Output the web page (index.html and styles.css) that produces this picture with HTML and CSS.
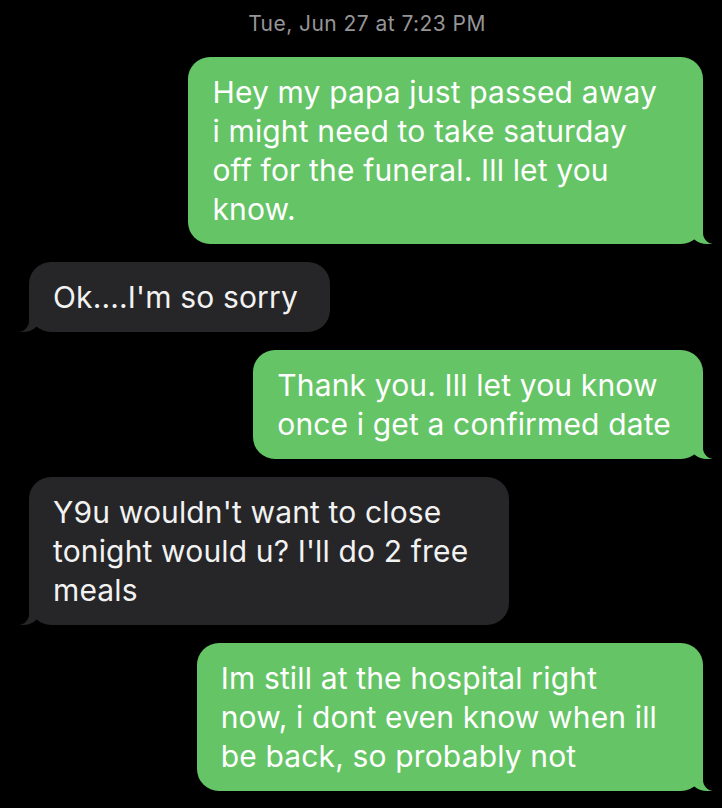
FILE: index.html
```html
<!DOCTYPE html>
<html lang="en">
<head>
    <meta charset="UTF-8">
    <title>Messages</title>
    <link rel="stylesheet" href="styles.css">
</head>
<body>

<div class="thread">
    <div class="stamp">Tue, Jun 27 at 7:23 PM</div>

    <div class="bubble sent long">Hey my papa just passed away<br>i might need to take saturday<br>off for the funeral. Ill let you<br>know.</div>

    <div class="bubble received">Ok....I'm so sorry</div>

    <div class="bubble sent">Thank you. Ill let you know<br>once i get a confirmed date</div>

    <div class="bubble received mid">Y9u wouldn't want to close<br>tonight would u? I'll do 2 free<br>meals</div>

    <div class="bubble sent long">Im still at the hospital right<br>now, i dont even know when ill<br>be back, so probably not</div>
</div>

</body>
</html>
```

FILE: styles.css
```css
body {
    margin: 0;
    background: #000;
    font-family: Inter, 'Liberation Sans', sans-serif;
}

.thread {
    display: flex;
    flex-direction: column;
    gap: 18px;
    padding: 12px 19px 16px 29px;
}

.stamp {
    align-self: center;
    margin: 0 0 3px 2px;
    font-size: 21px;
    line-height: 24px;
    letter-spacing: 0.45px;
    color: #959597;
}

.bubble {
    position: relative;
    padding: 16px 32px 15px 24px;
    border-radius: 22px;
    font-size: 30px;
    line-height: 39px;
    letter-spacing: 0.15px;
    color: #fff;
    white-space: nowrap;
}

/* wrapped bubbles keep some slack on the right */
.bubble.long {
    padding-right: 46px;
}

.bubble.mid {
    padding-right: 41px;
}

.sent {
    align-self: flex-end;
    background: #65c466;
}

.received {
    align-self: flex-start;
    background: #262628;
    color: #f2f2f2;
}

/* tails */
.bubble::before,
.bubble::after {
    content: "";
    position: absolute;
    bottom: 0;
    height: 24px;
}

.sent::before {
    right: -9px;
    width: 22px;
    background: #65c466;
    border-bottom-left-radius: 17px 14px;
}

.sent::after {
    right: -28px;
    width: 28px;
    background: #000;
    border-bottom-left-radius: 11px;
}

.received::before {
    left: -11px;
    width: 22px;
    background: #262628;
    border-bottom-right-radius: 17px 14px;
}

.received::after {
    left: -28px;
    width: 28px;
    background: #000;
    border-bottom-right-radius: 11px;
}
```
